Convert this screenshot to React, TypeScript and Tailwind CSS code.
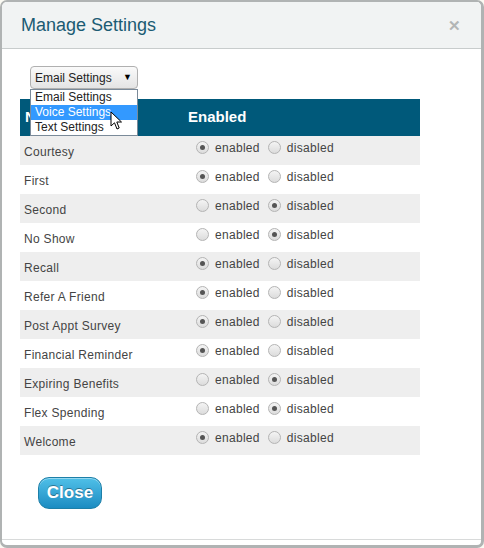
import React from "react";

const rows: [string, boolean][] = [
  ["Courtesy", true],
  ["First", true],
  ["Second", false],
  ["No Show", false],
  ["Recall", true],
  ["Refer A Friend", true],
  ["Post Appt Survey", true],
  ["Financial Reminder", true],
  ["Expiring Benefits", false],
  ["Flex Spending", false],
  ["Welcome", true],
];

function Radio({ on }: { on: boolean }) {
  return (
    <span className="flex items-center justify-center w-[13px] h-[13px] rounded-full border border-[#b4b4b4] bg-gradient-to-b from-[#f4f4f4] to-[#dcdcdc]">
      {on && <span className="block w-[5px] h-[5px] rounded-full bg-[#555]" />}
    </span>
  );
}

function Cursor() {
  return (
    <svg width="14" height="20" viewBox="0 0 14 20" className="absolute left-[79px] top-[6px]">
      <path d="M1 1 L1 15 L4.5 11.8 L7 18 L9.2 17 L6.8 11 L11.5 11 Z" fill="#fff" stroke="#000" strokeWidth="1" strokeLinejoin="round" />
    </svg>
  );
}

export default function App() {
  return (
    <div className="w-[484px] h-[548px] bg-[#fbfaf3]" style={{ fontFamily: "Arial, 'Liberation Sans', sans-serif" }}>
      <div className="w-[484px] h-[548px] rounded-[7px] border-[3px] border-t-[2px] border-l-[2px] border-[#b0b3b3] overflow-hidden flex flex-col bg-white">
        <div className="h-[47px] bg-[#f1f3f3] border-b border-[#c8cccc] flex items-center justify-between pl-[19px] pr-[20px] shrink-0">
          <span className="text-[18px] text-[#1b5b73] pt-[1px]">Manage Settings</span>
          <span className="text-[#b3b6b6] text-[15px] font-bold leading-none">✕</span>
        </div>
        <div className="flex-1 flex flex-col pl-[18px] pr-[62px] pt-[17px]">
          <div className="relative h-[22px] pl-[10px]">
            <div className="w-[108px] h-[23px] rounded-[4px] border border-[#b0b0b0] bg-gradient-to-b from-[#fafafa] to-[#e4e4e4] flex items-center justify-between pl-[4px] pr-[5px] text-[12px] text-[#222]">
              <span>Email Settings</span>
              <span className="text-[9px] leading-none text-black">▼</span>
            </div>
            <div className="absolute z-10 left-[10px] top-[23px] w-[108px] border border-[#7a8a99] bg-white text-[12px] text-[#222]">
              <div className="pl-[4px] h-[15px] leading-[15px]">Email Settings</div>
              <div className="pl-[4px] h-[15px] leading-[15px] bg-[#3399ff] text-white relative">
                Voice Settings
                <Cursor />
              </div>
              <div className="pl-[4px] h-[15px] leading-[15px]">Text Settings</div>
            </div>
          </div>
          <div className="mt-[11px] w-[400px]">
            <div className="h-[37px] bg-[#00597a] flex items-center text-white font-bold text-[15px]">
              <span className="w-[168px] pl-[5px]">Name</span>
              <span>Enabled</span>
            </div>
            {rows.map(([name, on], i) => (
              <div key={name} className={`h-[29px] flex text-[12px] text-[#444] ${i % 2 === 0 ? "bg-[#eeeeee]" : "bg-white"}`}>
                <span className="w-[176px] pl-[4px] pt-[7px] tracking-[0.3px]">{name}</span>
                <span className="flex items-start pt-[3px] gap-[6px] h-[20px]">
                  <span className="pt-[2px]"><Radio on={on} /></span>
                  <span className="tracking-[0.3px]">enabled</span>
                  <span className="pt-[2px] ml-[2px]"><Radio on={!on} /></span>
                  <span className="tracking-[0.3px]">disabled</span>
                </span>
              </div>
            ))}
          </div>
          <div className="pl-[18px] pt-[22px]">
            <button className="w-[64px] h-[32px] rounded-[11px] border border-[#1d7fa8] bg-gradient-to-b from-[#4fc0e8] to-[#1a8cc2] text-white font-bold text-[17px] [text-shadow:0_-1px_0_rgba(0,0,0,0.35)] shadow-[inset_0_1px_0_rgba(255,255,255,0.4)]">
              Close
            </button>
          </div>
        </div>
        <div className="h-[6px] border-t border-[#d8dada] shrink-0" />
      </div>
    </div>
  );
}
